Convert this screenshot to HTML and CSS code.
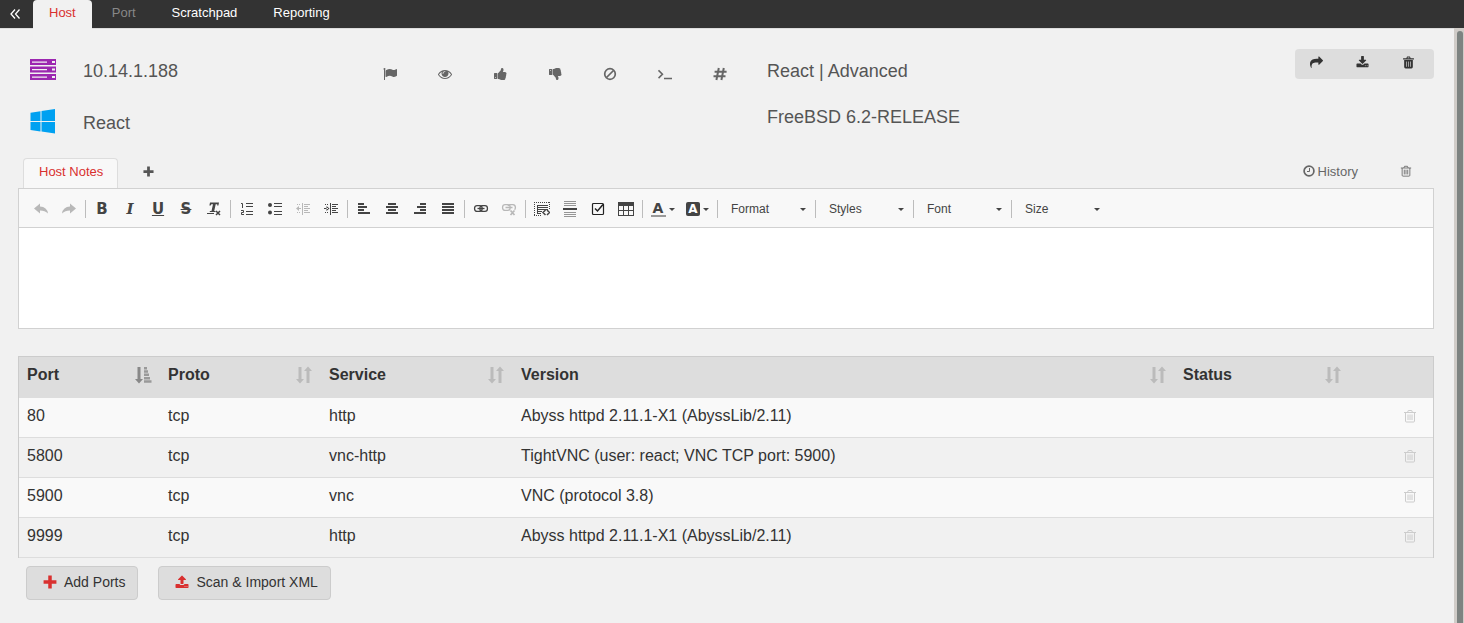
FILE: index.html
```html
<!DOCTYPE html>
<html lang="en">
<head>
<meta charset="utf-8">
<title>Host 10.14.1.188</title>
<link rel="stylesheet" href="styles.css">
</head>
<body>
<svg class="sprite" aria-hidden="true">
  <symbol id="flag" viewBox="0 0 1792 1792"><path d="M320 256q0 72-64 110v1266q0 13-9.500 22.500t-22.500 9.500h-64q-13 0-22.500-9.500t-9.500-22.500v-1266q-64-38-64-110 0-53 37.500-90.500t90.500-37.500 90.500 37.500 37.500 90.500zm1472 64v763q0 25-12.500 38.500t-39.500 27.500q-215 116-369 116-61 0-123.500-22t-108.500-48-115.500-48-142.500-22q-192 0-464 146-17 9-33 9-26 0-45-19t-19-45v-742q0-32 31-55 21-14 79-43 236-120 421-120 107 0 200 29t219 88q38 19 88 19 54 0 117.500-21t110-47 88-47 54.500-21q26 0 45 19t19 45z"/></symbol>
  <symbol id="eye" viewBox="0 0 1792 1792"><path d="M1664 960q-152-236-381-353 61 104 61 225 0 185-131.500 316.500t-316.500 131.500-316.500-131.500-131.500-316.500q0-121 61-225-229 117-381 353 133 205 333.500 326.500t434.500 121.500 434.500-121.500 333.500-326.500zm-720-384q0-20-14-34t-34-14q-125 0-214.500 89.500t-89.500 214.500q0 20 14 34t34 14 34-14 14-34q0-86 61-147t147-61q20 0 34-14t14-34zm848 384q0 34-20 69-140 230-376.500 368.500t-499.500 138.500-499.500-139-376.500-368q-20-35-20-69t20-69q140-229 376.500-368t499.500-139 499.500 139 376.500 368q20 35 20 69z"/></symbol>
  <symbol id="thumb" viewBox="0 0 1792 1792"><path d="M384 1344q0-26-19-45t-45-19q-27 0-45.500 19t-18.500 45q0 27 18.500 45.500t45.500 18.500q26 0 45-18.500t19-45.500zm160-512v640q0 26-19 45t-45 19h-288q-26 0-45-19t-19-45v-640q0-26 19-45t45-19h288q26 0 45 19t19 45zm1184 0q0 86-55 149 15 44 15 76 3 76-43 137 17 56 0 117-15 57-54 94 9 112-49 181-64 76-197 78h-129q-66 0-144-15.500t-121.500-29-120.500-39.500q-123-43-158-44-26-1-45-19.500t-19-44.500v-641q0-25 18-43.500t43-20.500q24-2 76-59t101-121q68-87 101-120 18-18 31-48t17.500-48.500 13.500-60.500q7-39 12.500-61t19.500-52 34-50q19-19 45-19 46 0 82.500 10.500t60 26 40 40.500 24 45 12 50 5 45 .5 39q0 38-9.500 76t-19 60-27.500 56q-3 6-10 18t-11 22-8 24h277q78 0 135 57t57 135z"/></symbol>
  <symbol id="ban" viewBox="0 0 14 14"><g fill="none" stroke="currentColor" stroke-width="1.700"><circle cx="7" cy="7" r="5.300"/><path d="M3.500 10.500l7-7"/></g></symbol>
  <symbol id="terminal" viewBox="0 0 14 14"><path d="M.5 3.300l3.900 3.900-3.900 3.900M6 11.500h8" fill="none" stroke="currentColor" stroke-width="1.600"/></symbol>
  <symbol id="hash" viewBox="0 0 14 14"><path d="M5.800 1L3.400 13M10.800 1L8.400 13M1.600 4.800h12M.5 9.200h12" fill="none" stroke="currentColor" stroke-width="2"/></symbol>
  <symbol id="share" viewBox="0 0 1792 1792"><path d="M1792 640q0 26-19 45l-512 512q-19 19-45 19t-45-19-19-45v-256h-224q-98 0-175.500 6t-154 21.500-133 42.500-105.500 69.500-80 101-48.500 138.500-17.500 181q0 55 5 123 0 6 2.500 23.500t2.500 26.500q0 15-8.500 25t-23.500 10q-16 0-28-17-7-9-13-22t-13.500-30-10.500-24q-127-285-127-451 0-199 53-333 162-403 875-403h224v-256q0-26 19-45t45-19 45 19l512 512q19 19 19 45z"/></symbol>
  <symbol id="download" viewBox="0 0 1792 1792"><path d="M1344 1344q0-26-19-45t-45-19-45 19-19 45 19 45 45 19 45-19 19-45zm256 0q0-26-19-45t-45-19-45 19-19 45 19 45 45 19 45-19 19-45zm128-224v320q0 40-28 68t-68 28h-1472q-40 0-68-28t-28-68v-320q0-40 28-68t68-28h465l135 136q58 56 136 56t136-56l136-136h464q40 0 68 28t28 68zm-325-569q17 41-14 70l-448 448q-18 19-45 19t-45-19l-448-448q-31-29-14-70 17-39 59-39h256v-448q0-26 19-45t45-19h256q26 0 45 19t19 45v448h256q42 0 59 39z"/></symbol>
  <symbol id="upload" viewBox="0 0 1792 1792"><path d="M1344 1472q0-26-19-45t-45-19-45 19-19 45 19 45 45 19 45-19 19-45zm256 0q0-26-19-45t-45-19-45 19-19 45 19 45 45 19 45-19 19-45zm128-224v320q0 40-28 68t-68 28h-1472q-40 0-68-28t-28-68v-320q0-40 28-68t68-28h427q21 56 70.500 92t110.500 36h256q61 0 110.500-36t70.500-92h427q40 0 68 28t28 68zm-325-648q-17 40-59 40h-256v448q0 26-19 45t-45 19h-256q-26 0-45-19t-19-45v-448h-256q-42 0-59-40-17-39 14-69l448-448q18-19 45-19t45 19l448 448q31 30 14 69z"/></symbol>
  <symbol id="trash" viewBox="0 0 12 12"><path fill-rule="evenodd" d="M1 2h3l.7-1.500h2.600L8 2h3v1.200H1zM5 2h2l-.3-.7H5.300zM2 3.700h8V10q0 1.500-1.300 1.500H3.300Q2 11.500 2 10zM3.700 5v5h.6V5zM5.700 5v5h.6V5zM7.700 5v5h.6V5z"/></symbol>
  <symbol id="trash-o" viewBox="0 0 14 14"><path d="M1 3.500h12M4.500 3.500L5.300 1.500h3.400l.8 2M2.500 3.500V12q0 1 1 1h7q1 0 1-1V3.500M5 5.500V11M7 5.500V11M9 5.500V11" fill="none" stroke="currentColor"/></symbol>
  <symbol id="plus" viewBox="0 0 12 12"><path d="M4.500 .5h3v4h4v3h-4v4h-3v-4h-4v-3h4z"/></symbol>
  <symbol id="clock" viewBox="0 0 12 12"><g fill="none" stroke="currentColor"><circle cx="6" cy="6" r="4.900" stroke-width="1.700"/><path d="M6.500 3v3.500H4"/></g></symbol>
  <symbol id="sort" viewBox="0 0 18 18"><path d="M3.500 1h3v12H9l-4 4.500L1 13h2.500zM11.500 17V5H9l4-4.500L17 5h-2.500v12z"/></symbol>
  <symbol id="sort-asc" viewBox="0 0 18 18"><path d="M3.500 1h3v12H9l-4 4.500L1 13h2.500z"/><path opacity=".8" d="M10 1h3v2.500h-3zM10 4.300h4v2.500h-4zM10 7.600h5v2.500h-5zM10 10.900h6v2.500h-6zM10 14.200h7.500v2.500H10z"/></symbol>
  <symbol id="undo" viewBox="0 0 16 16"><path d="M1 7.500L7 2.500v3q7 .3 8 7Q12 9.500 7 9.500v3z"/></symbol>
  <symbol id="clear" viewBox="0 0 16 16"><path d="M4 1.500h9l-.6 3h-1.200l.1-1.300H9.700L8.200 10h1.300v1H3.800v-1h1.700L7 3.200H5.300l-.6 1.300H3.400zM1 12h7v1H1z"/><path d="M10 10l4 4m0-4l-4 4" stroke="currentColor" stroke-width="1.500"/></symbol>
  <symbol id="ol" viewBox="0 0 16 16"><path d="M7 2h7v1H7zM7 5h7v1H7zM7 10h7v1H7zM7 13h7v1H7z"/><path d="M2 2.500h1.500V7M2 9.500h2.500v2h-2v2h2.500" fill="none" stroke="currentColor"/></symbol>
  <symbol id="ul" viewBox="0 0 16 16"><circle cx="3" cy="4" r="2"/><circle cx="3" cy="11.500" r="2"/><path d="M7 2.500h8M7 5.500h8M7 10.500h8M7 13.500h8" stroke="currentColor"/></symbol>
  <symbol id="outdent" viewBox="0 0 16 16"><path d="M2 7h4v1H2zM1 7.500L4 5v5zM7 2h1v12H7zM9 3h6v1H9zM9 5h4v1H9zM9 7h6v1H9zM9 9h4v1H9zM9 11h6v1H9zM2 3h1v1H2zM4 3h1v1H4zM2 11h1v1H2zM4 11h1v1H4z"/></symbol>
  <symbol id="indent" viewBox="0 0 16 16"><path d="M1 7h4v1H1zM6.500 7.500L3.500 5v5zM7 2h1v12H7zM9 3h6v1H9zM9 5h4v1H9zM9 7h6v1H9zM9 9h4v1H9zM9 11h6v1H9zM2 3h1v1H2zM4 3h1v1H4zM2 11h1v1H2zM4 11h1v1H4z"/></symbol>
  <symbol id="left" viewBox="0 0 16 16"><path d="M2 2h6v2H2zM2 5h9v2H2zM2 8h6v2H2zM2 11h12v2H2z"/></symbol>
  <symbol id="center" viewBox="0 0 16 16"><path d="M4 2h8v2H4zM2 5h12v2H2zM4 8h8v2H4zM2 11h12v2H2z"/></symbol>
  <symbol id="right" viewBox="0 0 16 16"><path d="M8 2h6v2H8zM5 5h9v2H5zM8 8h6v2H8zM2 11h12v2H2z"/></symbol>
  <symbol id="justify" viewBox="0 0 16 16"><path d="M2 2h12v2H2zM2 5h12v2H2zM2 8h12v2H2zM2 11h12v2H2z"/></symbol>
  <symbol id="link" viewBox="0 0 16 16"><g fill="none" stroke="currentColor" stroke-width="1.300"><rect x="1.600" y="4.600" width="7.500" height="5.800" rx="2.400"/><rect x="6.900" y="4.600" width="7.500" height="5.800" rx="2.400"/><path d="M4.500 7.500h7"/></g></symbol>
  <symbol id="unlink" viewBox="0 0 16 16"><g fill="none" stroke="currentColor" stroke-width="1.300"><rect x="1.600" y="3.600" width="7.500" height="5.800" rx="2.400"/><path d="M7 5q.5-1.400 2.400-1.400H12q2.400.2 2.400 2.900 0 1.500-.8 2.300M4.500 6.500h7"/><path stroke-width="1.700" d="M9.500 9.500l4 4.500m0-4.500l-4 4.500"/></g></symbol>
  <symbol id="template" viewBox="0 0 16 16"><path d="M0 1.500h16M.5 1v14M15.500 1v8M0 14.500h8" fill="none" stroke="currentColor" stroke-dasharray="1 1"/><path d="M3 4h11v1H3zM3 6h11v1H3zM3 8h11v1H3zM3 10h5v1H3zM3 12h4v1H3zM3 4h1v9H3z"/><path d="M11.500 9L9 11.500l2.500 2.500M13 9l2.500 2.500L13 14" fill="none" stroke="currentColor" stroke-width="1.500"/></symbol>
  <symbol id="break" viewBox="0 0 16 16"><path d="M1 7h14v2H1z"/><path opacity=".55" d="M2 0h12v1H2zM2 2h12v1H2zM2 4h12v1H2zM2 11h12v1H2zM2 13h12v1H2zM2 15h12v1H2z"/></symbol>
  <symbol id="check" viewBox="0 0 16 16"><rect x="2.500" y="2.500" width="11" height="11" rx="1" fill="none" stroke="#222" stroke-width="1.200"/><path d="M5 7.500l2.500 2.500L13 3.500" fill="none" stroke="#222" stroke-width="1.500"/></symbol>
  <symbol id="table" viewBox="0 0 16 16"><path fill-rule="evenodd" d="M0 1h16v14H0zM1 5v4h4V5zM6 5v4h4V5zM11 5v4h4V5zM1 10v4h4v-4zM6 10v4h4v-4zM11 10v4h4v-4z"/></symbol>
  <symbol id="server" viewBox="0 0 26 21"><path fill="#9c27b0" d="M0 0h26v6H0zM0 7.500h26v6H0zM0 15h26v6H0z"/><path fill="#f1f1f1" d="M2 2.400h15v1.300H2zM2 9.900h15v1.300H2zM2 17.400h15v1.300H2zM22 2h3v2h-3zM22 9.500h3v2h-3zM22 17h3v2h-3z"/></symbol>
  <symbol id="windows" viewBox="0 0 25 25"><path fill="#00a1f1" d="M0 3.800L10 2.200V12H0zM11 2L24.500 0v12H11zM0 13h10v9.500L0 21zM11 13h13.500v11.500L11 22.600z"/></symbol>
</svg>

<nav class="topbar">
  <button class="collapse" aria-label="Collapse sidebar"><svg width="10" height="10" viewBox="0 0 10 10"><path d="M5 .5L1 5l4 4.500M9.500 .5L5.500 5l4 4.500" fill="none" stroke="currentColor" stroke-width="1.300"/></svg></button>
  <a class="tab active" href="#host">Host</a>
  <a class="tab disabled" href="#port">Port</a>
  <a class="tab" href="#scratchpad">Scratchpad</a>
  <a class="tab" href="#reporting">Reporting</a>
</nav>

<div class="view">
<main class="page">
  <header class="host">
    <div class="identity">
      <svg class="device"><use href="#server"/></svg><span>10.14.1.188</span>
      <svg class="device"><use href="#windows"/></svg><span>React</span>
    </div>
    <div class="flags">
      <button aria-label="Flag"><svg><use href="#flag"/></svg></button>
      <button aria-label="Watch"><svg><use href="#eye"/></svg></button>
      <button aria-label="Thumbs up"><svg><use href="#thumb"/></svg></button>
      <button aria-label="Thumbs down"><svg class="flip-y"><use href="#thumb"/></svg></button>
      <button aria-label="Out of scope"><svg><use href="#ban"/></svg></button>
      <button aria-label="Shell"><svg><use href="#terminal"/></svg></button>
      <button aria-label="Root"><svg><use href="#hash"/></svg></button>
    </div>
    <div class="details"><span>React | Advanced</span><span>FreeBSD 6.2-RELEASE</span></div>
    <div class="tools">
      <button aria-label="Share"><svg><use href="#share"/></svg></button>
      <button aria-label="Download"><svg><use href="#download"/></svg></button>
      <button aria-label="Delete host"><svg><use href="#trash"/></svg></button>
    </div>
  </header>

  <div class="note-tabs">
    <a class="note-tab" href="#notes">Host Notes</a>
    <button class="add-note" aria-label="Add note"><svg><use href="#plus"/></svg></button>
    <button class="history"><svg><use href="#clock"/></svg>History</button>
    <button class="delete-note" aria-label="Delete note"><svg><use href="#trash-o"/></svg></button>
  </div>

  <section class="editor">
    <div class="toolbar">
      <div class="group">
        <button class="off" aria-label="Undo"><svg><use href="#undo"/></svg></button>
        <button class="off" aria-label="Redo"><svg class="flip-x"><use href="#undo"/></svg></button>
      </div>
      <div class="group">
        <button class="glyph">B</button>
        <button class="glyph italic">I</button>
        <button class="glyph underline">U</button>
        <button class="glyph strike">S</button>
        <button aria-label="Remove format"><svg><use href="#clear"/></svg></button>
      </div>
      <div class="group">
        <button aria-label="Numbered list"><svg><use href="#ol"/></svg></button>
        <button aria-label="Bulleted list"><svg><use href="#ul"/></svg></button>
        <button class="off" aria-label="Decrease indent"><svg><use href="#outdent"/></svg></button>
        <button aria-label="Increase indent"><svg><use href="#indent"/></svg></button>
      </div>
      <div class="group">
        <button aria-label="Align left"><svg><use href="#left"/></svg></button>
        <button aria-label="Center"><svg><use href="#center"/></svg></button>
        <button aria-label="Align right"><svg><use href="#right"/></svg></button>
        <button aria-label="Justify"><svg><use href="#justify"/></svg></button>
      </div>
      <div class="group">
        <button aria-label="Link"><svg><use href="#link"/></svg></button>
        <button class="off" aria-label="Unlink"><svg><use href="#unlink"/></svg></button>
      </div>
      <div class="group">
        <button aria-label="Code snippet"><svg><use href="#template"/></svg></button>
        <button aria-label="Page break"><svg><use href="#break"/></svg></button>
        <button aria-label="Checkbox"><svg><use href="#check"/></svg></button>
        <button aria-label="Table"><svg><use href="#table"/></svg></button>
      </div>
      <div class="group">
        <button class="color"><span class="text-color">A</span><i class="caret"></i></button>
        <button class="color"><span class="back-color">A</span><i class="caret"></i></button>
      </div>
      <div class="group"><select class="combo" aria-label="Format"><option>Format</option></select><i class="caret"></i></div>
      <div class="group"><select class="combo" aria-label="Styles"><option>Styles</option></select><i class="caret"></i></div>
      <div class="group"><select class="combo" aria-label="Font"><option>Font</option></select><i class="caret"></i></div>
      <div class="group"><select class="combo" aria-label="Size"><option>Size</option></select><i class="caret"></i></div>
    </div>
    <textarea class="note" aria-label="Host notes"></textarea>
  </section>

  <table class="ports">
    <colgroup><col class="c-port"><col class="c-proto"><col class="c-service"><col class="c-version"><col class="c-status"><col></colgroup>
    <thead>
      <tr>
        <th><div>Port<svg class="sorted"><use href="#sort-asc"/></svg></div></th>
        <th><div>Proto<svg><use href="#sort"/></svg></div></th>
        <th><div>Service<svg><use href="#sort"/></svg></div></th>
        <th><div>Version<svg><use href="#sort"/></svg></div></th>
        <th><div>Status<svg><use href="#sort"/></svg></div></th>
        <th></th>
      </tr>
    </thead>
    <tbody>
      <tr><td>80</td><td>tcp</td><td>http</td><td>Abyss httpd 2.11.1-X1 (AbyssLib/2.11)</td><td></td><td><button aria-label="Delete port 80"><svg><use href="#trash-o"/></svg></button></td></tr>
      <tr><td>5800</td><td>tcp</td><td>vnc-http</td><td>TightVNC (user: react; VNC TCP port: 5900)</td><td></td><td><button aria-label="Delete port 5800"><svg><use href="#trash-o"/></svg></button></td></tr>
      <tr><td>5900</td><td>tcp</td><td>vnc</td><td>VNC (protocol 3.8)</td><td></td><td><button aria-label="Delete port 5900"><svg><use href="#trash-o"/></svg></button></td></tr>
      <tr><td>9999</td><td>tcp</td><td>http</td><td>Abyss httpd 2.11.1-X1 (AbyssLib/2.11)</td><td></td><td><button aria-label="Delete port 9999"><svg><use href="#trash-o"/></svg></button></td></tr>
    </tbody>
  </table>

  <div class="actions">
    <button><svg><use href="#plus"/></svg>Add Ports</button>
    <button><svg><use href="#upload"/></svg>Scan &amp; Import XML</button>
  </div>
</main>
<div class="scrollbar"><div class="thumb"></div></div>
</div>
</body>
</html>
```
FILE: styles.css
```css
* { box-sizing: border-box; }

body {
  margin: 0;
  min-height: 100vh;
  display: flex;
  flex-direction: column;
  background: #f1f1f1;
  color: #333;
  font-family: "Liberation Sans", Arial, sans-serif;
  font-size: 13px;
}

.sprite { position: absolute; width: 0; height: 0; }

svg { display: block; flex: none; fill: currentColor; }

button {
  display: flex;
  align-items: center;
  justify-content: center;
  margin: 0;
  padding: 0;
  border: 0;
  background: none;
  color: inherit;
  font: inherit;
}

a { color: inherit; text-decoration: none; }

.flip-x { transform: scaleX(-1); }
.flip-y { transform: scaleY(-1); }

/* Top navigation */
.topbar {
  display: flex;
  gap: 4px;
  height: 28px;
  background: #333;
  color: #fff;
}
.collapse { width: 29px; }
.tab { padding: 0 16px; line-height: 26px; }
.tab.active {
  position: relative;
  height: 29px;
  border-radius: 4px 4px 0 0;
  background: #f1f1f1;
  color: #d9302f;
}
.tab.disabled { color: #888; }

.view { display: flex; flex: 1; }
.page { flex: 1; min-width: 0; padding: 0 20px 20px 18px; border-top: 1px solid #ddd; }

.scrollbar {
  width: 10px;
  padding: 3px 1px 0 3px;
  background: #d0ccc8;
}
.thumb { height: 100%; border-radius: 3px 3px 0 0; background: #7d8381; }

/* Host summary */
.host {
  display: flex;
  align-items: flex-start;
  height: 129px;
  color: #555;
  font-size: 18px;
}
.identity {
  display: grid;
  grid-template-columns: 53px 1fr;
  grid-auto-rows: 52px;
  align-items: center;
  width: 344px;
  padding: 16px 0 0 12px;
}
.device { width: 26px; height: 29px; padding-bottom: 4px; }
.flags { display: flex; padding-top: 37px; color: #666; }
.flags button { width: 55px; height: 16px; }
.flags svg { width: 14px; height: 14px; }
.details {
  display: flex;
  flex: 1;
  flex-direction: column;
  gap: 26px;
  padding: 32px 0 0 20px;
  line-height: 20px;
}
.tools {
  display: flex;
  margin-top: 20px;
  padding-right: 1px;
  border-radius: 4px;
  background: #ddd;
  color: #333;
}
.tools button { width: 46px; height: 30px; padding: 0 4px 3px 0; }
.tools svg { width: 13px; height: 13px; }

/* Notes */
.note-tabs { display: flex; height: 30px; padding-left: 5px; color: #666; }
.note-tab {
  padding: 0 14px 0 15px;
  border: 1px solid #ddd;
  border-bottom: 0;
  border-radius: 4px 4px 0 0;
  background: #f8f8f8;
  color: #d9302f;
  line-height: 26px;
}
.add-note { width: 60px; padding-bottom: 4px; color: #555; }
.add-note svg { width: 11px; height: 11px; }
.history { gap: 3px; margin-left: auto; padding-bottom: 4px; }
.history svg { width: 12px; height: 12px; }
.delete-note { width: 56px; margin-left: 20px; padding-bottom: 4px; }
.delete-note svg { width: 12px; height: 12px; }

.editor { border: 1px solid #d1d1d1; background: #fff; }
.toolbar {
  display: flex;
  height: 39px;
  padding: 2px 0 0 8px;
  border-bottom: 1px solid #d1d1d1;
  background: #f8f8f8;
  color: #444;
}
.group { position: relative; display: flex; align-items: center; padding-right: 5px; }
.group::after {
  content: "";
  position: absolute;
  right: 2px;
  width: 1px;
  height: 18px;
  background: #bcbcbc;
}
.group:last-child::after { display: none; }
.group button { width: 28px; height: 28px; }
.group svg { width: 16px; height: 16px; }
.group .off { opacity: .35; }
.group .glyph { font: bold 15px "DejaVu Sans", sans-serif; }
.group .italic { font: italic bold 15px "DejaVu Serif", serif; }
.underline { text-decoration: underline; }
.strike { text-decoration: line-through; }
.group .color { gap: 3px; width: 35px; }
.text-color {
  width: 15px;
  height: 15px;
  border-bottom: 2px solid #999;
  font: bold 14px/12px "DejaVu Sans", sans-serif;
}
.back-color {
  width: 14px;
  height: 14px;
  border-radius: 2px;
  background: #444;
  color: #fff;
  font: bold 12px/14px "DejaVu Sans", sans-serif;
}
.caret {
  width: 0;
  border: 3px solid transparent;
  border-top-color: #444;
  border-bottom: 0;
}
.combo {
  appearance: none;
  width: 93px;
  height: 28px;
  padding: 0 11px;
  border: 0;
  background: none;
  color: #444;
  font: 12px "Liberation Sans", Arial, sans-serif;
}
.combo + .caret { position: absolute; right: 12px; }
.note {
  display: block;
  width: 100%;
  height: 100px;
  padding: 12px;
  border: 0;
  resize: none;
  font: inherit;
}

/* Ports */
.ports {
  width: 100%;
  margin-top: 27px;
  border: 1px solid #ccc;
  border-bottom: 0;
  border-spacing: 0;
  table-layout: fixed;
  font-size: 16px;
  line-height: 22px;
}
.c-port { width: 141px; }
.c-proto { width: 161px; }
.c-service { width: 192px; }
.c-status { width: 175px; }
.ports col:last-child { width: 83px; }
.ports th { padding: 7px 8px 12px; background: #ddd; text-align: left; }
.ports th div { display: flex; align-items: center; justify-content: space-between; }
.ports th svg { width: 18px; height: 18px; color: #bbb; }
.ports th .sorted { color: #888; }
.ports td { padding: 7px 8px 10px; border-bottom: 1px solid #ddd; }
.ports tbody tr:nth-child(odd) { background: #f9f9f9; }
.ports td button { margin-left: auto; padding-right: 8px; height: 22px; color: #ccc; }
.ports td svg { width: 14px; height: 14px; }

.actions { display: flex; gap: 20px; padding: 8px 8px 0; }
.actions button {
  gap: 7px;
  height: 34px;
  padding: 0 12px 2px 16px;
  border: 1px solid #ccc;
  border-radius: 4px;
  background: #ddd;
  font-size: 14px;
}
.actions svg { width: 14px; height: 14px; color: #d9302f; }
```
